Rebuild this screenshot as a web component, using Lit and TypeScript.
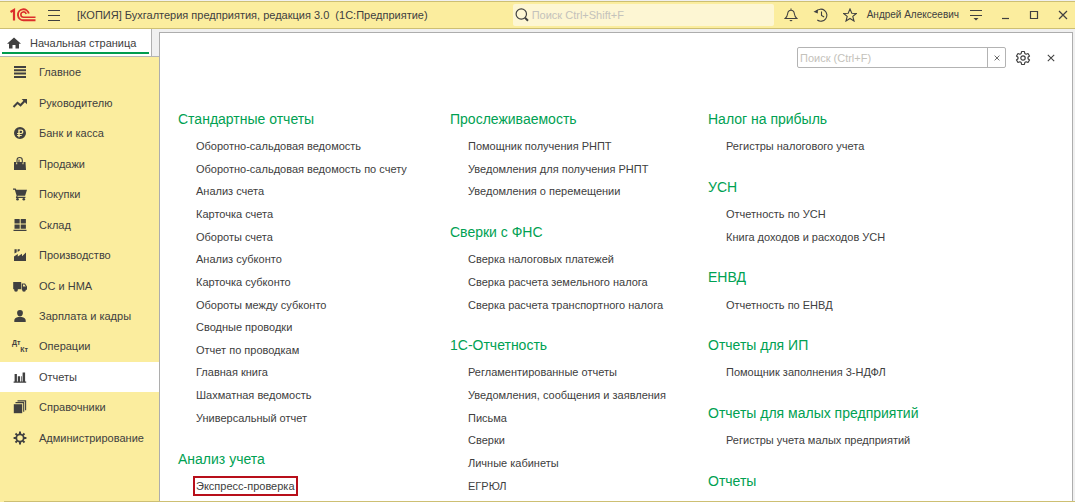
import { LitElement, html, css, svg } from "lit";
import { customElement, state } from "lit/decorators.js";
import { classMap } from "lit/directives/class-map.js";
import { styleMap } from "lit/directives/style-map.js";

interface Group {
  title: string;
  items: string[];
}

/* Relative heights of the rows in the report menu. */
const HEADING_SHARE = 7;
const ITEM_SHARE = 5;
const GAP_SHARE = 3;

const COLUMNS: Group[][] = [
  [
    {
      title: "Стандартные отчеты",
      items: [
        "Оборотно-сальдовая ведомость",
        "Оборотно-сальдовая ведомость по счету",
        "Анализ счета",
        "Карточка счета",
        "Обороты счета",
        "Анализ субконто",
        "Карточка субконто",
        "Обороты между субконто",
        "Сводные проводки",
        "Отчет по проводкам",
        "Главная книга",
        "Шахматная ведомость",
        "Универсальный отчет",
      ],
    },
    { title: "Анализ учета", items: ["Экспресс-проверка"] },
  ],
  [
    {
      title: "Прослеживаемость",
      items: ["Помощник получения РНПТ", "Уведомления для получения РНПТ", "Уведомления о перемещении"],
    },
    {
      title: "Сверки с ФНС",
      items: ["Сверка налоговых платежей", "Сверка расчета земельного налога", "Сверка расчета транспортного налога"],
    },
    {
      title: "1С-Отчетность",
      items: [
        "Регламентированные отчеты",
        "Уведомления, сообщения и заявления",
        "Письма",
        "Сверки",
        "Личные кабинеты",
        "ЕГРЮЛ",
      ],
    },
  ],
  [
    { title: "Налог на прибыль", items: ["Регистры налогового учета"] },
    { title: "УСН", items: ["Отчетность по УСН", "Книга доходов и расходов УСН"] },
    { title: "ЕНВД", items: ["Отчетность по ЕНВД"] },
    { title: "Отчеты для ИП", items: ["Помощник заполнения 3-НДФЛ"] },
    { title: "Отчеты для малых предприятий", items: ["Регистры учета малых предприятий"] },
    { title: "Отчеты", items: [] },
  ],
];

/* Section icons, each on a 16 x 16 grid. */
const SECTIONS = [
  { label: "Главное", icon: svg`<path d="M2 2h12v2H2zM2 5.300h12v2H2zM2 8.600h12v2H2zM2 12h12v2H2z"/>` },
  {
    label: "Руководителю",
    icon: svg`<path d="M1.500 12 5.500 7.800 8.500 10.300 12.600 6" fill="none" stroke="currentColor" stroke-width="2"/><path d="M9.600 4H15v5.200z"/>`,
  },
  {
    label: "Банк и касса",
    icon: svg`<path fill-rule="evenodd" d="M8 2a6 6 0 1 0 0 12A6 6 0 0 0 8 2zM6.300 4.600h2.900a2.200 2.200 0 0 1 0 4.500H7.700v.8h2v1.200h-2v1.200H6.300v-1.200H5.100V9.900h1.200v-.8H5.100V7.900h1.200zM7.700 5.800v2.100h1.400a1 1 0 0 0 0-2.100z"/>`,
  },
  {
    label: "Продажи",
    icon: svg`<path d="M2 6h2.200v2.200h1V6h5.300v2.200h1V6H13.500l.5 8H2z"/><path d="M5 6.800V4.200a2.600 2.600 0 0 1 5.300 0V6.800M7 6V3.500" fill="none" stroke="currentColor" stroke-width="1.100"/>`,
  },
  {
    label: "Покупки",
    icon: svg`<path d="M1 2.500h2.700l.6 1.300H15l-1.900 6H5.700l-.3 1h8v1.200H3.800l.8-2.600L2.800 3.800H1z"/><circle cx="5.500" cy="13.300" r="1.300"/><circle cx="11.800" cy="13.300" r="1.300"/>`,
  },
  { label: "Склад", icon: svg`<path d="M2.500 2h5.200v4.500H2.500zM8.700 2h5.200v4.500H8.700zM2.500 7.400h5.200v4.300H2.500zM8.700 7.400h5.200v4.300H8.700zM1.500 12.700h13V14h-13z"/>` },
  {
    label: "Производство",
    icon: svg`<path d="M2 14V9.500L5.800 7v2.400L10 6.800v2.400L14 5.500V14z"/><path d="M2.500 2.200h2.200v3L2.500 6.600zM5.600 2.200h2.200v1.400L5.600 4.900z"/>`,
  },
  {
    label: "ОС и НМА",
    icon: svg`<path d="M1.200 4h8v7.200h-8z"/><path fill-rule="evenodd" d="M9.800 5.500h3.200l2 3v3.200H9.800zM11 6.500v2h2.800l-1.400-2z"/><circle cx="4" cy="11.800" r="1.900"/><circle cx="12" cy="11.800" r="1.900"/>`,
  },
  {
    label: "Зарплата и кадры",
    icon: svg`<path d="M8 2a2.900 2.900 0 0 1 2.900 3c0 1.800-1.200 3.500-2.900 3.500S5.100 6.800 5.100 5A2.900 2.900 0 0 1 8 2zM6.300 9h3.400c2.600.4 4 1.600 4 3.600V14H2.300v-1.400c0-2 1.400-3.200 4-3.600z"/>`,
  },
  {
    label: "Операции",
    icon: null,
  },
  { label: "Отчеты", icon: svg`<path d="M2.600 5h2.300v7.400H2.600zM5.800 7.200H8v5.200H5.800zM8.900 7.200h.8v5.200h-.8zM10.600 3.400h2.500v9h-2.500zM1.600 12.400h12.600v1.400H1.600z"/>` },
  {
    label: "Справочники",
    icon: svg`<path d="M1.800 5.200h8.400v9H1.800z"/><path d="M3.500 3.600h8.200v9.200M5.500 1.900h8.100v9.400" fill="none" stroke="currentColor" stroke-width="1.100"/>`,
  },
  {
    label: "Администрирование",
    icon: svg`<circle cx="8" cy="8" r="3.700" fill="none" stroke="currentColor" stroke-width="1.800"/><path d="M8 1.600V4M8 12v2.400M1.600 8H4M12 8h2.400M3.500 3.500l1.600 1.600M10.900 10.900l1.600 1.600M3.500 12.500l1.600-1.600M10.900 5.100l1.600-1.600" stroke="currentColor" stroke-width="2"/>`,
  },
];

@customElement("app-root")
export class AppRoot extends LitElement {
  @state() private section = "Отчеты";

  static styles = css`
    :host {
      display: grid;
      grid-template-rows: auto 1fr;
      box-sizing: border-box;
      height: 100vh;
      padding-top: 1px;
      overflow: hidden;
      background: #f0f0f0;
      color: #404040;
      font: 11px/16px "Liberation Sans", Arial, sans-serif;
    }
    * {
      box-sizing: border-box;
    }
    button {
      display: inline-flex;
      align-items: center;
      justify-content: center;
      padding: 0;
      border: 0;
      background: none;
      color: inherit;
      font: inherit;
      cursor: pointer;
    }
    a {
      color: inherit;
      text-decoration: none;
    }
    ul {
      margin: 0;
      padding: 0;
      list-style: none;
    }
    input {
      min-width: 0;
      border: 0;
      background: none;
      color: inherit;
      font: inherit;
      outline: none;
    }
    svg {
      display: block;
    }
    .line {
      fill: none;
      stroke: currentColor;
    }

    .titlebar {
      display: flex;
      align-items: center;
      height: 28px;
      border: solid #cdbf73;
      border-width: 1px 0;
      background: #fbed9e;
    }
    .logo {
      margin-left: 10px;
    }
    .burger {
      margin-left: 11px;
    }
    .title {
      flex: 1;
      margin: 0 0 0 16px;
      font-size: 11px;
      font-weight: 400;
      white-space: pre;
    }
    .global-search {
      display: flex;
      align-items: center;
      gap: 3px;
      width: 261px;
      height: 22px;
      padding-left: 2px;
      border-radius: 2px;
      background: #fdf6d3;
    }
    .global-search input {
      flex: 1;
      padding: 0;
    }
    input::placeholder {
      color: #c4c2bb;
      opacity: 1;
    }
    .tools {
      display: flex;
      align-items: center;
      padding-left: 9px;
      padding-right: 4px;
    }
    .tools .notify {
      width: 16px;
      margin-right: 14px;
    }
    .user {
      margin: 0 10px;
      font-size: 10px;
    }
    .window {
      display: flex;
      gap: 13px;
      margin-left: 14px;
    }

    .body {
      display: grid;
      grid-template-columns: 159px minmax(0, 1fr);
      min-height: 0;
    }
    .side {
      display: flex;
      flex-direction: column;
      min-height: 0;
    }
    .tabs {
      height: 28px;
      border-bottom: 1px solid #b5b5b5;
    }
    .tab {
      display: flex;
      align-items: center;
      gap: 9px;
      width: 152px;
      height: 27px;
      padding-left: 7px;
      border-right: 1px solid #b0b0b0;
      background: linear-gradient(#009c4d, #009c4d) 2px 23px / 147px 2px no-repeat #fff;
    }
    .sections {
      display: flex;
      flex: 1;
      flex-direction: column;
      min-height: 0;
      padding-bottom: 49px;
      background: #fbed9e;
    }
    .sections li {
      display: flex;
      flex: 1;
    }
    .sections a {
      display: flex;
      flex: 1;
      align-items: center;
      gap: 11px;
      padding-left: 12px;
    }
    .sections .current {
      background: #fff;
    }
    .sections svg {
      fill: currentColor;
    }
    .dtkt {
      display: grid;
      width: 16px;
      font-size: 7px;
      font-weight: 700;
      line-height: 7px;
    }
    .dtkt span:last-child {
      text-align: right;
    }

    .panel {
      display: flex;
      flex-direction: column;
      min-height: 0;
      margin: 3px 2px 0 0;
      border: 1px solid #adadad;
      border-bottom: 0;
      background: #fff;
    }
    .panel-tools {
      display: flex;
      align-items: center;
      justify-content: flex-end;
      padding: 14px 17px 0 0;
    }
    .menu-search {
      display: flex;
      width: 209px;
      height: 21px;
      border: 1px solid #b3b3b3;
      border-radius: 2px;
    }
    .menu-search input {
      flex: 1;
      padding: 0 2px;
    }
    .menu-search button {
      width: 18px;
      border-left: 1px solid #b3b3b3;
    }
    .settings {
      margin: 0 16px 0 9px;
    }
    .menu {
      display: grid;
      flex: 1;
      grid-template-columns: 272fr 258fr 364fr;
      min-height: 0;
      padding: 35px 0 5px 18px;
    }
    .column,
    .group,
    .group ul {
      display: flex;
      flex-direction: column;
      min-height: 0;
    }
    .group + .group::before {
      content: "";
      flex: 3 1 0;
    }
    .group h2 {
      display: flex;
      flex: 7 1 0;
      align-items: center;
      margin: 0;
      color: #00a152;
      font-size: 14px;
      font-weight: 400;
      line-height: 16px;
    }
    .group ul {
      padding-left: 18px;
    }
    .group li {
      display: flex;
      flex: 1 1 0;
      align-items: center;
      min-height: 0;
      line-height: 14px;
      white-space: nowrap;
    }
    .marked {
      outline: 2px solid #b80f1a;
      outline-offset: 1px;
    }
    .baseline {
      position: fixed;
      right: 0;
      bottom: 0;
      left: 4px;
      height: 1px;
      background: #cdbf73;
    }
  `;

  private cross(size: number) {
    return html`<svg class="line" width=${size} height=${size} viewBox="0 0 10 10"><path d="M1 1l8 8M9 1L1 9" stroke-width="1.300" /></svg>`;
  }

  private renderTitlebar() {
    return html`
      <header class="titlebar">
        <svg class="logo" width="26" height="14" viewBox="0 0 26 14" fill="none" stroke="#dc2f2b" aria-label="1С" role="img">
          <path d="M.5 4 4 2v10.500" stroke-width="2.200" />
          <path d="M18.800 5.500A5.500 5.500 0 1 0 13.500 12.300H25.500" stroke-width="1.900" />
          <path d="M16.200 6A2.700 2.700 0 1 0 13.500 9.300H25.500" stroke-width="1.600" />
        </svg>
        <button class="burger" aria-label="Меню">
          <svg class="line" width="14" height="12" viewBox="0 0 14 12"><path d="M1 1.500h12M1 6.500h12M1 11.500h12" /></svg>
        </button>
        <h1 class="title">[КОПИЯ] Бухгалтерия предприятия, редакция 3.0  (1С:Предприятие)</h1>
        <label class="global-search">
          <svg class="line" width="14" height="14" viewBox="0 0 14 14"><circle cx="6.300" cy="6" r="5.200" stroke-width="1.200" /><path d="M10 9.800l3 3" stroke-width="2" /></svg>
          <input type="search" placeholder="Поиск Ctrl+Shift+F" aria-label="Поиск" />
        </label>
        <div class="tools">
          <button class="notify" aria-label="Уведомления">
            <svg class="line" width="14" height="14" viewBox="0 0 14 14"><path d="M1.200 10.500h11.600C11.200 9.300 10.700 8 10.300 5.500 10 3.300 8.800 2.200 7 2.200S4 3.300 3.700 5.500C3.300 8 2.800 9.300 1.200 10.500zM7 .6v1.600" stroke-width="1.100" /><path d="M5.300 12h3.400L7 13.500z" fill="currentColor" stroke="none" /></svg>
          </button>
          <button class="notify" aria-label="История">
            <svg class="line" width="15" height="14" viewBox="0 0 15 14"><path d="M3.200 3.400A6 6 0 1 1 4.300 12M8.500 3.500v4l2.600 1.500" stroke-width="1.100" /><path d="M.5 3.800 4.800 5.500V1.500z" fill="currentColor" stroke="none" /></svg>
          </button>
          <button aria-label="Избранное">
            <svg class="line" width="14" height="14" viewBox="0 0 14 14"><path d="M7 1l1.800 4.200 4.500.3-3.500 2.900L11 13 7 10.500 3 13l1.200-4.600L.7 5.500l4.500-.3z" stroke-width="1.100" /></svg>
          </button>
          <button class="user">Андрей Алексеевич</button>
          <button aria-label="Настройки окна">
            <svg class="line" width="14" height="12" viewBox="0 0 14 12"><path d="M1 1.500h12M1 6.500h12" stroke-width="1.200" /><path d="M4.500 9h5L7 11.500z" fill="currentColor" stroke="none" /></svg>
          </button>
          <div class="window">
            <button aria-label="Свернуть"><svg class="line" width="16" height="12" viewBox="0 0 16 12"><path d="M5 9.500h7" stroke-width="1.200" /></svg></button>
            <button aria-label="Развернуть"><svg class="line" width="16" height="12" viewBox="0 0 16 12"><path d="M4.500 2.500h7v7h-7z" stroke-width="1.200" /></svg></button>
            <button aria-label="Закрыть"><svg class="line" width="16" height="12" viewBox="0 0 16 12"><path d="M4 2l8 8M12 2l-8 8" stroke-width="1.200" /></svg></button>
          </div>
        </div>
      </header>
    `;
  }

  private renderSide() {
    return html`
      <div class="side">
        <div class="tabs">
          <a class="tab" href="#home">
            <svg width="14" height="12" viewBox="0 0 14 12" fill="currentColor"><path d="M7 .5 14 6.800h-2V11.500H8.500V8h-3v3.500H2V6.800H0z" /></svg>
            Начальная страница
          </a>
        </div>
        <ul class="sections">
          ${SECTIONS.map(
            ({ label, icon }) => html`
              <li>
                <a
                  href="#"
                  class=${classMap({ current: label === this.section })}
                  @click=${(e: Event) => {
                    e.preventDefault();
                    this.section = label;
                  }}
                >
                  ${icon
                    ? html`<svg width="16" height="16" viewBox="0 0 16 16">${icon}</svg>`
                    : html`<span class="dtkt" aria-hidden="true"><span>Дт</span><span>Кт</span></span>`}
                  ${label}
                </a>
              </li>
            `
          )}
        </ul>
      </div>
    `;
  }

  private renderGroup(group: Group, index: number) {
    const list = group.items.length * ITEM_SHARE;
    const total = list + HEADING_SHARE + (index ? GAP_SHARE : 0);
    return html`
      <section class="group" style=${styleMap({ flex: `${total} 1 0` })}>
        <h2>${group.title}</h2>
        ${list
          ? html`<ul style=${styleMap({ flex: `${list} 1 0` })}>
              ${group.items.map(
                (item) => html`<li><a href="#" class=${classMap({ marked: item === "Экспресс-проверка" })}>${item}</a></li>`
              )}
            </ul>`
          : null}
      </section>
    `;
  }

  render() {
    return html`
      ${this.renderTitlebar()}
      <div class="body">
        ${this.renderSide()}
        <main class="panel">
          <div class="panel-tools">
            <div class="menu-search">
              <input type="text" placeholder="Поиск (Ctrl+F)" aria-label="Поиск по меню" />
              <button aria-label="Очистить">${this.cross(6)}</button>
            </div>
            <button class="settings" aria-label="Настройка">
              <svg class="line" width="16" height="16" viewBox="0 0 16 16">
                <path d="M6.600 1.500h2.800l.4 2 1.300.7 1.900-.7 1.500 2.500-1.500 1.300v1.400l1.500 1.300-1.500 2.500-1.900-.7-1.300.7-.4 2H6.600l-.4-2-1.300-.7-1.900.7L1.500 10 3 8.700V7.300L1.500 6 3 3.500l1.900.7 1.300-.7z" stroke-width="1.200" stroke-linejoin="round" />
                <circle cx="8" cy="8" r="2.200" stroke-width="1.200" />
              </svg>
            </button>
            <button class="close" aria-label="Закрыть">${this.cross(8)}</button>
          </div>
          <div class="menu">
            ${COLUMNS.map((column) => html`<div class="column">${column.map((group, i) => this.renderGroup(group, i))}</div>`)}
          </div>
        </main>
      </div>
      <div class="baseline"></div>
    `;
  }
}
